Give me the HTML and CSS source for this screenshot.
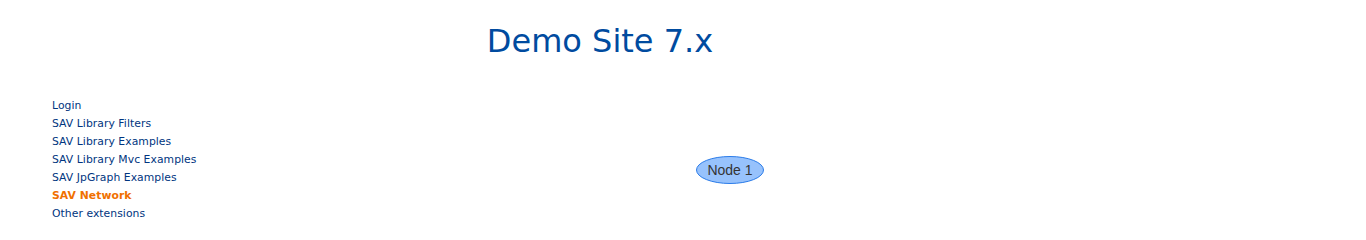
FILE: index.html
```html
<!DOCTYPE html>
<html lang="en">
<head>
<meta charset="utf-8">
<title>Demo Site 7.x</title>
<link rel="stylesheet" href="styles.css">
</head>
<body>
<div class="wrapper">
  <header class="header">
    <h1 class="site-title">Demo Site 7.x</h1>
  </header>
  <div class="main">
    <nav class="menu">
      <a class="menu-item" href="#">Login</a>
      <a class="menu-item" href="#">SAV Library Filters</a>
      <a class="menu-item" href="#">SAV Library Examples</a>
      <a class="menu-item" href="#">SAV Library Mvc Examples</a>
      <a class="menu-item" href="#">SAV JpGraph Examples</a>
      <a class="menu-item active" href="#">SAV Network</a>
      <a class="menu-item" href="#">Other extensions</a>
    </nav>
    <div class="content">
      <svg class="network" width="940" height="135" viewBox="0 0 940 135">
        <ellipse cx="470" cy="73" rx="33.5" ry="13.5" fill="#97c2fc" stroke="#2b7ce9" stroke-width="1"/>
        <text x="470" y="77.5" text-anchor="middle" class="node-label">Node 1</text>
      </svg>
    </div>
  </div>
</div>
</body>
</html>
```

FILE: styles.css
```css
html, body {
  margin: 0;
  padding: 0;
  background: #ffffff;
}

.wrapper {
  width: 1200px;
}

.header {
  padding-top: 23px;
}

.site-title {
  margin: 0;
  font-family: "DejaVu Sans", Verdana, sans-serif;
  font-size: 32px;
  font-weight: normal;
  line-height: 37px;
  color: #004b9f;
  text-align: center;
}

.main {
  display: grid;
  grid-template-columns: 260px 940px;
  margin-top: 37px;
}

.menu {
  display: flex;
  flex-direction: column;
  padding-left: 52px;
}

.menu-item {
  font-family: "DejaVu Sans", Verdana, sans-serif;
  font-size: 10.8px;
  letter-spacing: 0.05px;
  line-height: 18px;
  color: #003580;
  text-decoration: none;
}

.menu-item.active {
  color: #f07000;
  font-weight: bold;
}

.network {
  display: block;
}

.node-label {
  font-family: "Liberation Sans", Arial, sans-serif;
  font-size: 14px;
  fill: #343434;
}
```
